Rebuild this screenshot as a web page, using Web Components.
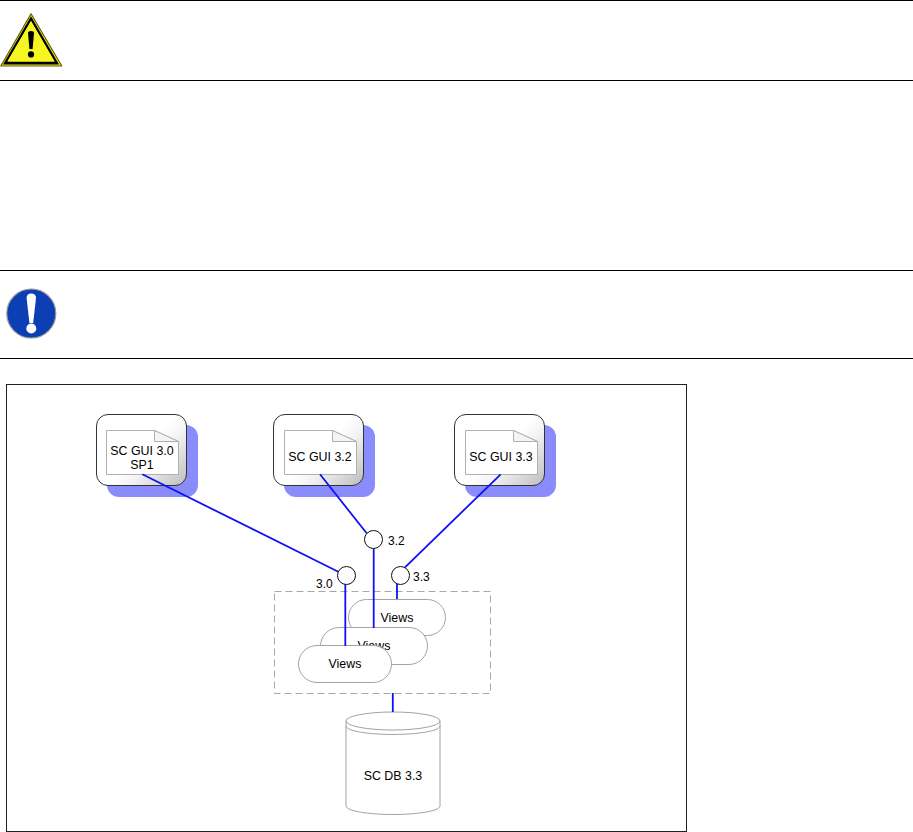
<!DOCTYPE html>
<html>
<head>
<meta charset="utf-8">
<title>SC GUI</title>
<style>
    html, body { margin: 0; padding: 0; background: #fff; }
    body { width: 913px; height: 832px; overflow: hidden; font-family: "Liberation Sans", Arial, sans-serif; }
    doc-notice.warning { height: 81px; }
    doc-notice.info { height: 89px; margin-top: 189px; }
    diagram-frame { margin: 25px 0 0 6px; }
</style>
</head>
<body>

<doc-notice class="warning" pad-top="13">
    <svg slot="icon" width="64" height="56" viewBox="0 0 64 56">
        <path d="M31 .8 L.8 53 L61.8 53 Z" fill="#e8e81c" stroke="#5e5e10" stroke-width="1.2" stroke-linejoin="round"/>
        <path fill-rule="evenodd" fill="#000" d="M31 3.2 L3 51.6 L59 51.6 Z M31 8 L7.4 48.6 L54.600 48.6 Z"/>
        <path d="M31 8 L7.4 48.6 L54.600 48.6 Z" fill="#f6f620"/>
        <path fill="#000" d="M28 20 Q28 18 31 18 Q34 18 34 20 L32.6 36 L29.4 36 Z"/>
        <circle cx="31" cy="41.4" r="3.1" fill="#000"/>
    </svg>
</doc-notice>

<doc-notice class="info" pad-top="17">
    <svg slot="icon" width="64" height="56" viewBox="0 0 64 56">
        <circle cx="31.3" cy="26.5" r="24.5" fill="#0b3fb3" stroke="#9a9a9a" stroke-width="1.2"/>
        <path fill="#fff" d="M26.6 11 Q26.6 6.5 31.3 6.5 Q36 6.5 36 11 L33.2 36 L29.4 36 Z"/>
        <circle cx="31.3" cy="41.5" r="5" fill="#fff"/>
    </svg>
</doc-notice>

<diagram-frame>
    <gui-node x="95.5" y="414" doc-x="9" label="SC GUI 3.0|SP1"></gui-node>
    <gui-node x="272.5" y="414" label="SC GUI 3.2"></gui-node>
    <gui-node x="453.5" y="414" label="SC GUI 3.3"></gui-node>

    <dashed-group x="274" y="591" w="216" h="102"></dashed-group>
    <views-pill x="348" y="599" w="98" h="37"></views-pill>
    <views-pill x="320" y="627" w="108" h="38"></views-pill>
    <views-pill x="298" y="645" w="94" h="38"></views-pill>

    <db-cylinder x="345" y="711"></db-cylinder>

    <diagram-wires></diagram-wires>

    <port-circle x="373.7" y="539.3" label="3.2" lx="388" ly="541.5"></port-circle>
    <port-circle x="346.7" y="575" label="3.0" lx="316" ly="584"></port-circle>
    <port-circle x="400.7" y="575" label="3.3" lx="413" ly="577.5"></port-circle>
</diagram-frame>

<script>
// page coords of the frame corner, diagram items are given in page coords
const frameLeft = 6;
const frameTop = 384;

class DocNotice extends HTMLElement {
    constructor() {
        super();
        this.attachShadow({ mode: 'open' });
    }

    connectedCallback() {
        const padTop = this.getAttribute('pad-top') || '0';
        this.shadowRoot.innerHTML = `
            <style>
                :host {
                    display: block;
                    box-sizing: border-box;
                    border-top: 1px solid #000;
                    border-bottom: 1px solid #000;
                }
                .icon { display: flex; padding-top: ${padTop - 1}px; }
            </style>
            <div class="icon"><slot name="icon"></slot></div>
            <slot></slot>
        `;
    }
}

class DiagramFrame extends HTMLElement {
    constructor() {
        super();
        this.attachShadow({ mode: 'open' });
        this.shadowRoot.innerHTML = `
            <style>
                :host {
                    display: block;
                    position: relative;
                    width: 681px;
                    height: 448px;
                    box-shadow: inset 0 0 0 1px #222;
                    font-family: "Liberation Sans", Arial, sans-serif;
                    font-size: 12.4px;
                    color: #000;
                }
            </style>
            <slot></slot>
        `;
    }
}

// anything with x / y placed on the diagram canvas
class DiagramItem extends HTMLElement {
    constructor() {
        super();
        this.attachShadow({ mode: 'open' });
    }

    get px() { return parseFloat(this.getAttribute('x') || '0'); }
    get py() { return parseFloat(this.getAttribute('y') || '0'); }
    get pw() { return parseFloat(this.getAttribute('w') || '0'); }
    get ph() { return parseFloat(this.getAttribute('h') || '0'); }

    place() {
        this.style.left = (this.px - frameLeft) + 'px';
        this.style.top = (this.py - frameTop) + 'px';
    }
}

class GuiNode extends DiagramItem {
    connectedCallback() {
        this.place();
        const lines = (this.getAttribute('label') || '').split('|');
        const docX = this.getAttribute('doc-x') || '10';
        this.shadowRoot.innerHTML = `
            <style>
                :host { display: block; position: absolute; width: 103px; height: 83px; }
                .shadow {
                    position: absolute; left: 11px; top: 11px;
                    width: 91px; height: 72px;
                    border-radius: 12px;
                    background: #8a8cfb;
                }
                .box {
                    position: absolute; left: 0; top: 0;
                    box-sizing: border-box;
                    width: 91px; height: 72px;
                    display: flex;
                    justify-content: flex-start;
                    align-items: flex-start;
                    padding: 15px 0 0 ${docX}px;
                    border: 1px solid #333;
                    border-radius: 12px;
                    background: linear-gradient(135deg, #fff 50%, #f2f2f2 65%, #bdbdbd 100%);
                }
                .doc { position: relative; width: 73px; height: 45px; }
                svg { position: absolute; left: 0; top: 0; }
                .text {
                    position: absolute; inset: 0;
                    display: flex; flex-direction: column;
                    justify-content: center; align-items: center;
                    line-height: 14.5px;
                    padding-top: ${lines.length > 1 ? 11 : 9}px;
                    box-sizing: border-box;
                    white-space: nowrap;
                }
            </style>
            <div class="shadow"></div>
            <div class="box">
                <div class="doc">
                    <svg width="73" height="45" viewBox="0 0 73 45">
                        <path d="M.5 .5 H48.5 L72.5 11.5 V44.5 H.5 Z" fill="#fff" stroke="#b0b0b0"/>
                        <path d="M48.5 .5 V11.5 H72.5 Z" fill="#f4f4f4" stroke="#b0b0b0"/>
                    </svg>
                    <div class="text">${lines.map(l => `<span>${l}</span>`).join('')}</div>
                </div>
            </div>
        `;
    }
}

class DashedGroup extends DiagramItem {
    connectedCallback() {
        this.place();
        this.shadowRoot.innerHTML = `
            <style>
                :host { display: block; position: absolute; width: ${this.pw}px; height: ${this.ph}px; }
                svg { display: block; overflow: visible; }
            </style>
            <svg width="${this.pw}" height="${this.ph}">
                <rect x=".5" y=".5" width="${this.pw}" height="${this.ph}" fill="none" stroke="#a8a8a8" stroke-dasharray="7 4"/>
            </svg>
        `;
    }
}

class ViewsPill extends DiagramItem {
    connectedCallback() {
        this.place();
        this.shadowRoot.innerHTML = `
            <style>
                :host {
                    display: flex;
                    position: absolute;
                    box-sizing: border-box;
                    width: ${this.pw}px;
                    height: ${this.ph}px;
                    justify-content: center;
                    align-items: center;
                    border: 1px solid #a4a4a4;
                    border-radius: 19px;
                    background: #fff;
                }
            </style>
            <span>Views</span>
        `;
    }
}

class DbCylinder extends DiagramItem {
    connectedCallback() {
        this.place();
        this.shadowRoot.innerHTML = `
            <style>
                :host { display: block; position: absolute; width: 96px; height: 105px; }
                svg { position: absolute; left: 0; top: 0; }
                span {
                    position: absolute; left: 0; right: 0; top: 58px;
                    text-align: center; line-height: 15px;
                }
            </style>
            <svg width="96" height="105" viewBox="0 0 96 105" fill="none" stroke="#a2a2a2">
                <ellipse cx="48" cy="10" rx="47" ry="9"/>
                <path d="M1 10 V95 C1 100 24 103.500 48 103.500 C72 103.500 95 100 95 95 V10"/>
                <path d="M1 15 C1 20 24 23.500 48 23.500 C72 23.500 95 20 95 15"/>
            </svg>
            <span>SC DB 3.3</span>
        `;
    }
}

class DiagramWires extends HTMLElement {
    constructor() {
        super();
        this.attachShadow({ mode: 'open' });
        const segments = [
            [142.3, 474.3, 338.3, 571.7],
            [345.3, 584, 345.3, 646],
            [320, 474.3, 366.7, 533.3],
            [373.7, 548, 373.7, 628],
            [500.7, 474.3, 405, 567.3],
            [397, 583, 397, 599],
            [392.8, 693, 392.8, 712]
        ];
        const lines = segments.map(([x1, y1, x2, y2]) =>
            `<line x1="${x1 - frameLeft}" y1="${y1 - frameTop}" x2="${x2 - frameLeft}" y2="${y2 - frameTop}"/>`
        ).join('');
        this.shadowRoot.innerHTML = `
            <style>
                :host { display: block; position: absolute; left: 0; top: 0; width: 681px; height: 448px; pointer-events: none; }
                svg { display: block; }
            </style>
            <svg width="681" height="448" stroke="#1010f4" stroke-width="1.8">${lines}</svg>
        `;
    }
}

class PortCircle extends DiagramItem {
    connectedCallback() {
        this.place();
        const label = this.getAttribute('label');
        const lx = parseFloat(this.getAttribute('lx')) - this.px;
        const ly = parseFloat(this.getAttribute('ly')) - this.py;
        this.shadowRoot.innerHTML = `
            <style>
                :host { display: block; position: absolute; width: 0; height: 0; }
                .ring {
                    position: absolute; left: -9.500px; top: -9.500px;
                    box-sizing: border-box;
                    width: 19px; height: 19px;
                    border: 1.2px solid #111;
                    border-radius: 50%;
                    background: #fff;
                }
                span {
                    position: absolute; left: ${lx}px; top: ${ly - 7.5}px;
                    line-height: 15px; font-size: 12px;
                }
            </style>
            <div class="ring"></div>
            <span>${label}</span>
        `;
    }
}

customElements.define('doc-notice', DocNotice);
customElements.define('diagram-frame', DiagramFrame);
customElements.define('gui-node', GuiNode);
customElements.define('dashed-group', DashedGroup);
customElements.define('views-pill', ViewsPill);
customElements.define('db-cylinder', DbCylinder);
customElements.define('diagram-wires', DiagramWires);
customElements.define('port-circle', PortCircle);
</script>
</body>
</html>
